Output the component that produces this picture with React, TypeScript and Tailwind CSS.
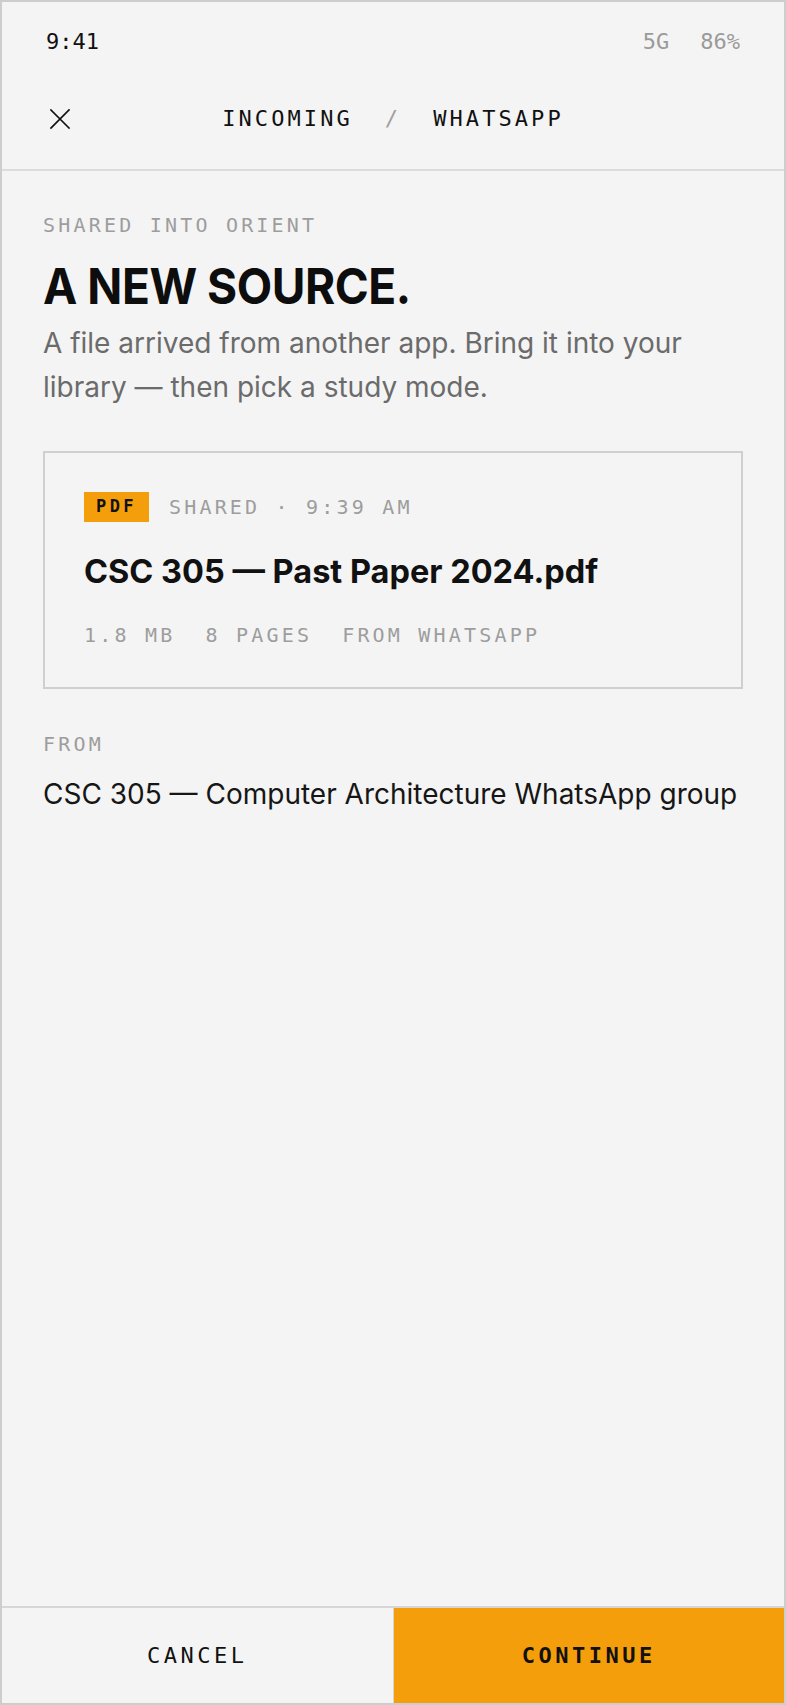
const MONO = 'font-["DejaVu_Sans_Mono","Liberation_Mono",monospace]';
const SANS = 'font-["Inter","Noto_Sans",sans-serif]';

function Label({ children, className = '' }: { children: React.ReactNode; className?: string }) {
  return (
    <div
      className={`font-["DejaVu_Sans_Mono","Liberation_Mono",monospace] text-[20px] leading-[28px] tracking-[0.16em] text-[#9d9d9d] ${className}`}
    >
      {children}
    </div>
  );
}

function CloseIcon() {
  return (
    <svg width="22" height="22" viewBox="0 0 22 22" fill="none" stroke="#111" strokeWidth="1.7" strokeLinecap="square">
      <path d="M2 2L20 20M20 2L2 20" />
    </svg>
  );
}

export default function App() {
  return (
    <div className="w-[786px] h-[1705px] border-2 border-[#cdcdcd] bg-[#f4f4f4] flex flex-col">
      {/* status bar */}
      <div
        className={`${MONO} h-[80px] px-[44px] flex items-center justify-between text-[22px] leading-[28px]`}
      >
        <span className="text-[#111]">9:41</span>
        <div className="flex gap-[31px] text-[#9a9a9a]">
          <span>5G</span>
          <span>86%</span>
        </div>
      </div>

      {/* header */}
      <div className="h-[89px] border-b-2 border-[#dcdcdc] pt-[23px] px-[47px] grid grid-cols-[1fr_auto_1fr] items-start">
        <div className="h-[28px] flex items-center">
          <CloseIcon />
        </div>
        <div
          className={`${MONO} flex gap-[32px] text-[22px] leading-[28px] tracking-[0.14em] text-[#111]`}
        >
          <span>INCOMING</span>
          <span className="text-[#a0a0a0]">/</span>
          <span>WHATSAPP</span>
        </div>
        <div />
      </div>

      {/* content */}
      <div className="flex-1 px-[41px] pt-[40px]">
        <Label>SHARED INTO ORIENT</Label>
        <h1 className={`${SANS} mt-[22px] font-bold text-[50px] leading-[50px] tracking-[-0.01em] text-[#0d0d0d] origin-left scale-x-[0.92]`}>
          A NEW SOURCE.
        </h1>
        <p className={`${SANS} mt-[10px] text-[28px] leading-[44px] text-[#6b6b6b]`}>
          A file arrived from another app. Bring it into your library — then pick a study mode.
        </p>

        {/* file card */}
        <div className="mt-[42px] border-2 border-[#cfcfcf] px-[39px] pt-[39px] pb-[38px]">
          <div className="flex items-center gap-[20px]">
            <span
              className={`${MONO} h-[30px] px-[12px] flex items-center bg-[#f59e0b] text-[17px] font-bold tracking-[0.2em] text-[#111]`}
            >
              PDF
            </span>
            <Label>SHARED · 9:39 AM</Label>
          </div>
          <div className={`${SANS} mt-[30px] text-[32.5px] leading-[40px] font-bold text-[#111]`}>
            CSC 305 — Past Paper 2024.pdf
          </div>
          <Label className="mt-[29px] flex gap-[30px]">
            <span>1.8 MB</span>
            <span>8 PAGES</span>
            <span>FROM WHATSAPP</span>
          </Label>
        </div>

        <Label className="mt-[41px]">FROM</Label>
        <div className={`${SANS} mt-[18px] text-[28px] leading-[36px] text-[#161616]`}>
          CSC 305 — Computer Architecture WhatsApp group
        </div>
      </div>

      {/* actions */}
      <div className={`${MONO} h-[97px] border-t-2 border-[#d6d6d6] flex text-[22px] tracking-[0.16em] text-[#111]`}>
        <button className="flex-1 flex items-center justify-center border-r border-[#d6d6d6]">
          CANCEL
        </button>
        <button className="flex-1 flex items-center justify-center bg-[#f59e0b] font-bold">
          CONTINUE
        </button>
      </div>
    </div>
  );
}
